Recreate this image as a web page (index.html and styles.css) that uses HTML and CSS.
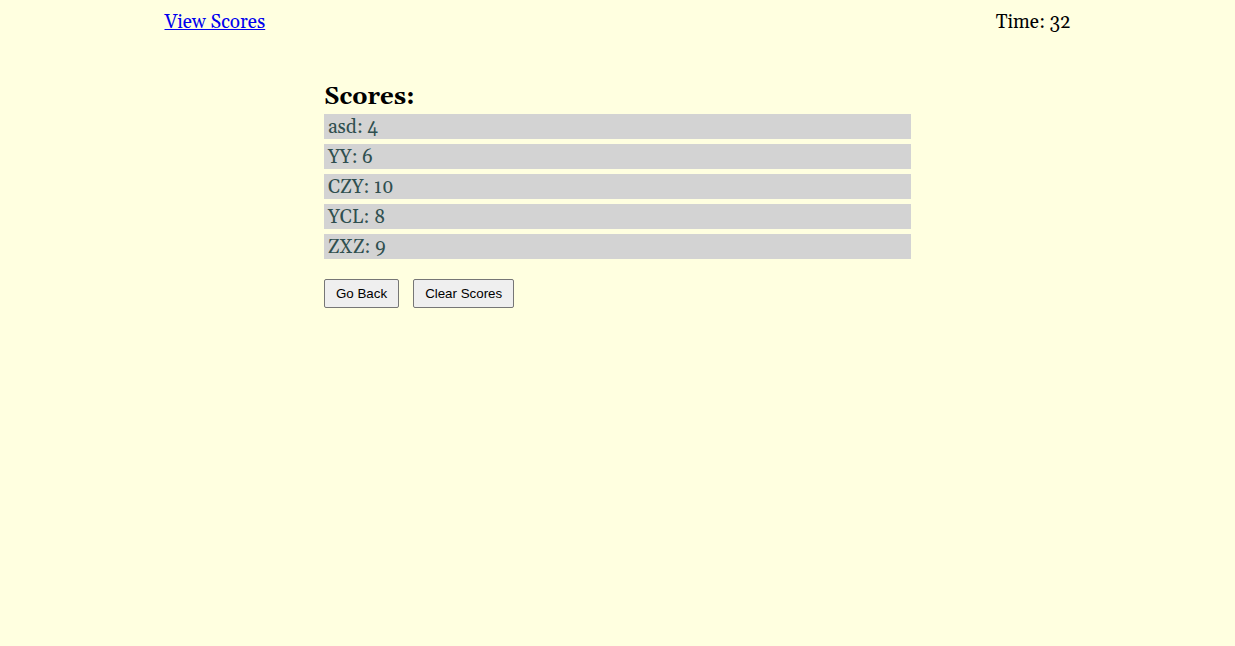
FILE: index.html
```html
<!DOCTYPE html>
<html lang="en">
<head>
<meta charset="utf-8">
<title>Scores</title>
<link rel="stylesheet" href="styles.css">
</head>
<body>
<header class="topbar">
  <a class="scores-link" href="#scores">View Scores</a>
  <div class="timer">Time: 32</div>
</header>
<main class="scores" id="scores">
  <h2 class="title">Scores:</h2>
  <ol class="list">
    <li class="entry">asd: 4</li>
    <li class="entry">YY: 6</li>
    <li class="entry">CZY: 10</li>
    <li class="entry">YCL: 8</li>
    <li class="entry">ZXZ: 9</li>
  </ol>
  <div class="actions">
    <button class="btn" type="button">Go Back</button>
    <button class="btn" type="button">Clear Scores</button>
  </div>
</main>
</body>
</html>
```

FILE: styles.css
```css
* {
  box-sizing: border-box;
}

body {
  margin: 0;
  background: #ffffe0;
  color: #000;
  font-family: Georgia, Gelasio, "Liberation Serif", serif;
  font-size: 19px;
  line-height: 23px;
}

.topbar {
  display: flex;
  justify-content: space-between;
  max-width: 906px;
  margin: 0 auto;
  padding-top: 11px;
}

.scores-link {
  color: #00e;
  text-decoration-thickness: 1px;
}

.scores {
  max-width: 587px;
  margin: 48px auto 0;
}

.title {
  margin: 0;
  font-size: 24px;
  line-height: 30px;
}

.list {
  display: grid;
  gap: 5px;
  margin: 2px 0 20px;
  padding: 0;
  list-style: none;
}

.entry {
  padding: 2px 4px 0;
  background: lightgray;
  color: darkslategray;
}

.actions {
  display: flex;
  gap: 14px;
}

.btn {
  padding: 6px 11px;
  border: 1px solid #767676;
  border-radius: 2px;
  background: #efefef;
  color: #000;
  font-family: Arial, "Liberation Sans", sans-serif;
  line-height: 15px;
}
```
